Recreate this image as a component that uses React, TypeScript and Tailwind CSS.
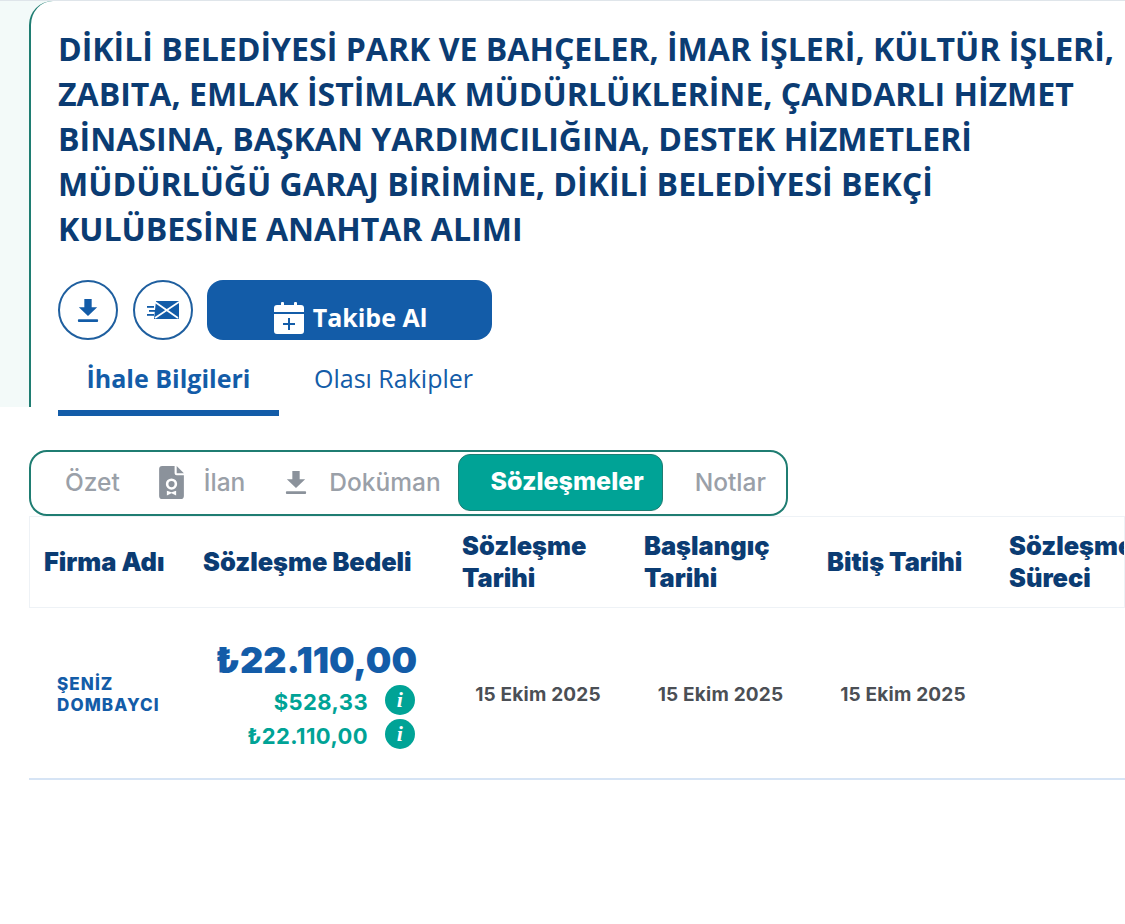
function DownloadIcon({ className }: { className?: string }) {
  return (
    <svg viewBox="0 0 24 28" className={className} fill="currentColor">
      <path d="M8 2h8v9h6L12 20.500 2 11h6z" />
      <rect x="1" y="24" width="22" height="3" rx="1" />
    </svg>
  );
}

function MailIcon({ className }: { className?: string }) {
  return (
    <svg viewBox="0 0 32 20" className={className} fill="currentColor">
      <rect x="0" y="6" width="7" height="1.800" />
      <rect x="2" y="10" width="7" height="1.800" />
      <rect x="0" y="14" width="7" height="1.800" />
      <path d="M9 1h22a1 1 0 0 1 1 1v16a1 1 0 0 1-1 1H7z" />
      <path d="M8 2l23 16M32 2L8 18" fill="none" stroke="white" strokeWidth="1.800" />
    </svg>
  );
}

function CalendarPlusIcon({ className }: { className?: string }) {
  return (
    <svg viewBox="0 0 30 32" className={className} fill="currentColor">
      <rect x="7" y="0" width="3" height="6" rx="1" />
      <rect x="20" y="0" width="3" height="6" rx="1" />
      <path d="M3 3h24a3 3 0 0 1 3 3v4H0V6a3 3 0 0 1 3-3z" />
      <path
        fillRule="evenodd"
        d="M0 12h30v17a3 3 0 0 1-3 3H3a3 3 0 0 1-3-3zM14 16v5H9v2h5v5h2v-5h5v-2h-5v-5z"
      />
    </svg>
  );
}

function FileBadgeIcon({ className }: { className?: string }) {
  return (
    <svg viewBox="0 0 24 32" className={className} fill="currentColor">
      <path
        fillRule="evenodd"
        d="M3 0h12v7a2 2 0 0 0 2 2h7v20a3 3 0 0 1-3 3H3a3 3 0 0 1-3-3V3a3 3 0 0 1 3-3zM12 12a5.500 5.500 0 1 0 0 11 5.500 5.500 0 0 0 0-11zm0 2.500a3 3 0 1 1 0 6 3 3 0 0 1 0-6zM7.500 24v4.500l4.500-2 4.500 2V24l-4.500 1.500z"
      />
      <path d="M17 0l7 7h-7z" />
    </svg>
  );
}

function InfoBadge() {
  return (
    <span className="flex h-[30px] w-[30px] shrink-0 items-center justify-center rounded-full bg-[#00a396] font-['Liberation_Serif',serif] text-[22px] font-bold italic leading-none text-white">
      i
    </span>
  );
}

const headers = [
  { label: "Firma Adı", width: "w-[159px]" },
  { label: "Sözleşme Bedeli", width: "w-[259px]" },
  { label: "Sözleşme Tarihi", width: "w-[182px]", narrow: true },
  { label: "Başlangıç Tarihi", width: "w-[183px]", narrow: true },
  { label: "Bitiş Tarihi", width: "w-[182px]" },
  { label: "Sözleşme Süreci", width: "w-[131px]", narrow: true },
];

const dates = [
  { value: "15 Ekim 2025", width: "w-[182px]" },
  { value: "15 Ekim 2025", width: "w-[183px]" },
  { value: "15 Ekim 2025", width: "w-[182px]" },
];

export default function App() {
  return (
    <div className="h-[924px] w-[1125px] overflow-hidden bg-white font-['Inter',sans-serif]">
      <section className="flex h-[407px] border-t border-[#dfe5ea] bg-[#f3faf9] pl-[29px]">
        <div className="h-[406px] flex-1 rounded-tl-[24px] border-l-2 border-[#1f7d72] bg-white pl-[27px] font-['Open_Sans',sans-serif]">
          <h1 className="whitespace-nowrap pt-[25px] text-[32.060px] font-bold leading-[45px] text-[#0b3c73]">
            DİKİLİ BELEDİYESİ PARK VE BAHÇELER, İMAR İŞLERİ, KÜLTÜR İŞLERİ,
            <br />
            ZABITA, EMLAK İSTİMLAK MÜDÜRLÜKLERİNE, ÇANDARLI HİZMET
            <br />
            BİNASINA, BAŞKAN YARDIMCILIĞINA, DESTEK HİZMETLERİ
            <br />
            MÜDÜRLÜĞÜ GARAJ BİRİMİNE, DİKİLİ BELEDİYESİ BEKÇİ
            <br />
            KULÜBESİNE ANAHTAR ALIMI
          </h1>

          <div className="mt-[29px] flex items-center">
            <button className="flex h-[60px] w-[60px] items-center justify-center rounded-full border-2 border-[#1f5f9f] bg-white text-[#135ca8]">
              <DownloadIcon className="h-[28px] w-[22px]" />
            </button>
            <button className="ml-[15px] flex h-[60px] w-[60px] items-center justify-center rounded-full border-2 border-[#1f5f9f] bg-white text-[#135ca8]">
              <MailIcon className="h-[20px] w-[32px]" />
            </button>
            <button className="ml-[14px] flex h-[60px] w-[285px] items-end justify-center gap-[9px] rounded-[16px] bg-[#135ca8] pb-[6px] pl-[2px] text-[25px] font-bold leading-[32px] text-white">
              <CalendarPlusIcon className="h-[32px] w-[30px]" />
              <span className="mb-[1px]">Takibe Al</span>
            </button>
          </div>

          <div className="mt-[18px] flex text-[25px] leading-[40px] text-[#135ca8]">
            <div className="flex h-[58px] w-[221px] justify-center border-b-[6px] border-[#135ca8] font-bold">
              İhale Bilgileri
            </div>
            <div className="ml-[35px]">Olası Rakipler</div>
          </div>
        </div>
      </section>

      <div className="ml-[29px] mt-[43px] flex h-[66px] w-[759px] items-center rounded-[18px] border-2 border-[#1f7d72] bg-white pb-[2px] pl-[34px] text-[24.500px] font-medium text-[#9aa0a8]">
        <span>Özet</span>
        <FileBadgeIcon className="ml-[39px] h-[33px] w-[25px] text-[#8b929b]" />
        <span className="ml-[20px]">İlan</span>
        <DownloadIcon className="ml-[40px] h-[26px] w-[22px] text-[#8b929b]" />
        <span className="ml-[22px]">Doküman</span>
        <span className="ml-[17px] flex h-[57px] w-[205px] items-center justify-center rounded-[12px] border border-[#1f7d72] bg-[#00a396] pl-[14px] text-[25px] font-extrabold text-white">
          Sözleşmeler
        </span>
        <span className="ml-[32px]">Notlar</span>
      </div>

      <div className="ml-[29px] flex h-[92px] w-[1096px] items-center overflow-hidden border border-[#eef2f6] text-[25.400px] font-black leading-[32px] text-[#0b3c73]">
        {headers.map((h) => (
          <div
            key={h.label}
            className={`${h.width} shrink-0 pl-[14px] ${h.narrow ? "pr-[20px]" : "whitespace-nowrap"}`}
          >
            {h.label}
          </div>
        ))}
      </div>

      <div className="ml-[29px] flex h-[172px] w-[1096px] items-center border-b-2 border-[#d6e4f5]">
        <div className="w-[159px] shrink-0 pl-[28px] pt-[4px] text-[17px] font-extrabold leading-[21px] tracking-[1.100px] text-[#135ca8]">
          ŞENİZ
          <br />
          DOMBAYCI
        </div>
        <div className="flex w-[259px] shrink-0 flex-col items-end pr-[32px] pt-[2px]">
          <div className="-mr-[2px] text-[36px] font-black leading-[42px] text-[#135ca8]">₺22.110,00</div>
          <div className="mt-[4px] flex h-[30px] items-center gap-[17px] text-[22px] font-bold leading-[30px] tracking-[0.4px] text-[#00a396]">
            <span className="pt-[4px]">$528,33</span>
            <InfoBadge />
          </div>
          <div className="mt-[4px] flex h-[30px] items-center gap-[17px] text-[22px] font-bold leading-[30px] tracking-[0.4px] text-[#00a396]">
            <span className="pt-[4px]">₺22.110,00</span>
            <InfoBadge />
          </div>
        </div>
        {dates.map((d, i) => (
          <div
            key={i}
            className={`${d.width} shrink-0 pt-[5px] text-center text-[19px] font-bold tracking-[0.2px] text-[#4b4f55]`}
          >
            {d.value}
          </div>
        ))}
      </div>
    </div>
  );
}
